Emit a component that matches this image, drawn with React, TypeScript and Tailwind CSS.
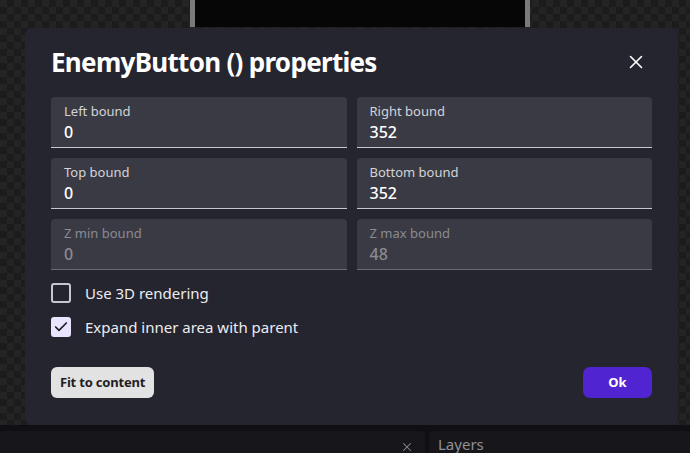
import { X, Check } from 'lucide-react';

const fields = [
  { label: 'Left bound', value: '0', disabled: false },
  { label: 'Right bound', value: '352', disabled: false },
  { label: 'Top bound', value: '0', disabled: false },
  { label: 'Bottom bound', value: '352', disabled: false },
  { label: 'Z min bound', value: '0', disabled: true },
  { label: 'Z max bound', value: '48', disabled: true },
];

function Field({ label, value, disabled }: { label: string; value: string; disabled: boolean }) {
  return (
    <div
      className={`flex h-[51px] flex-col rounded-t-[4px] bg-[#3a3a44] px-[13px] pt-[6px] border-b ${
        disabled ? 'border-[#6a6a72]' : 'border-[#c8c8cc]'
      }`}
    >
      <span className={`text-[13px] leading-[16px] ${disabled ? 'text-[#8a8a92]' : 'text-[#d4d4d8]'}`}>{label}</span>
      <span className={`mt-[3px] text-[16px] font-medium leading-[20px] ${disabled ? 'text-[#8a8a92]' : 'text-white'}`}>
        {value}
      </span>
    </div>
  );
}

function Checkbox({ checked, label }: { checked: boolean; label: string }) {
  return (
    <div className="flex h-[20px] items-center gap-[14px]">
      {checked ? (
        <span className="flex h-[20px] w-[20px] items-center justify-center rounded-[3px] bg-[#e9e4ff]">
          <Check className="h-[16px] w-[16px] text-[#1e1e28]" strokeWidth={2.5} />
        </span>
      ) : (
        <span className="h-[20px] w-[20px] rounded-[3px] border-2 border-[#c8c8cc]" />
      )}
      <span className="text-[15px] text-[#ececf0]">{label}</span>
    </div>
  );
}

export default function App() {
  return (
    <div className="relative flex h-[453px] w-[690px] flex-col overflow-hidden font-['Noto_Sans',sans-serif] bg-[#1d1d1d]">
      {/* Canvas */}
      <div className="flex-1 bg-[repeating-conic-gradient(#1c1c1c_0%_25%,#242424_0%_50%)] bg-[length:14px_14px]">
        <div className="ml-[190px] flex h-[27px] w-[340px]">
          <div className="w-[5px] bg-[#7a7a7a]" />
          <div className="flex-1 bg-[#060606]" />
          <div className="w-[5px] bg-[#7a7a7a]" />
        </div>
      </div>

      {/* Bottom panels */}
      <div className="flex h-[28px] gap-[4px] bg-[#101014] pt-[6px]">
        <div className="flex w-[425px] justify-end rounded-t-[4px] bg-[#17171b] pr-[11px] pt-[9px]">
          <X className="h-[14px] w-[14px] text-[#8a8a90]" strokeWidth={1.75} />
        </div>
        <div className="flex-1 rounded-t-[4px] bg-[#17171b] pl-[9px] pt-[3px] text-[15px] leading-[20px] text-[#8f8f96]">
          Layers
        </div>
      </div>

      {/* Dialog */}
      <div className="absolute left-[25px] top-[28px] flex h-[397px] w-[653px] flex-col rounded-[7px] bg-[#25252f] px-[26px] pb-[27px] pt-[16px]">
        <div className="flex h-[36px] items-center justify-between">
          <h1 className="text-[26px] font-bold tracking-[-0.7px] text-white">EnemyButton () properties</h1>
          <X className="mr-[5px] h-[22px] w-[22px] text-white" strokeWidth={1.75} />
        </div>

        <div className="mt-[17px] grid grid-cols-2 gap-x-[10px] gap-y-[10px]">
          {fields.map((f) => (
            <Field key={f.label} {...f} />
          ))}
        </div>

        <div className="mt-[13px] flex flex-col gap-[14px]">
          <Checkbox checked={false} label="Use 3D rendering" />
          <Checkbox checked label="Expand inner area with parent" />
        </div>

        <div className="mt-auto flex items-center justify-between">
          <button className="h-[31px] rounded-[6px] bg-[#e2e2e2] px-[9px] text-[13px] font-bold tracking-[-0.2px] text-[#1e1e24]">
            Fit to content
          </button>
          <button className="h-[31px] w-[69px] rounded-[7px] bg-[#5024d0] text-[13px] font-bold text-white">Ok</button>
        </div>
      </div>
    </div>
  );
}
